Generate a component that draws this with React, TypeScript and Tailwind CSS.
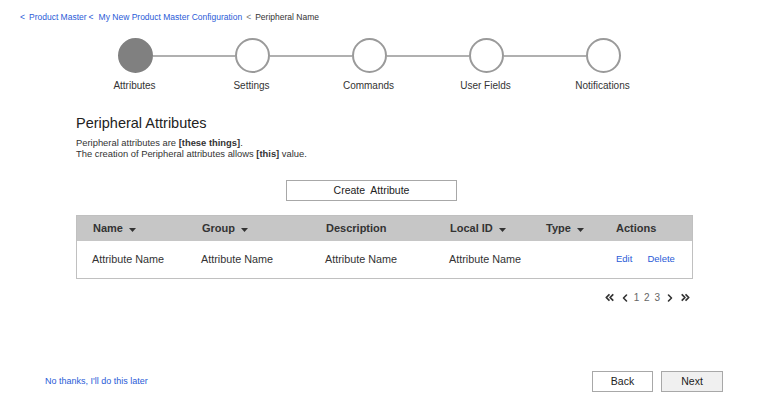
import { ChevronLeft, ChevronRight, ChevronsLeft, ChevronsRight } from "lucide-react";

const steps = ["Attributes", "Settings", "Commands", "User Fields", "Notifications"];

const Caret = () => (
  <svg width="7" height="4" viewBox="0 0 7 4" className="ml-[6px] mt-[2px]">
    <path d="M0 0 L7 0 L3.5 4 Z" fill="#333" />
  </svg>
);

export default function App() {
  return (
    <div className="w-[760px] h-[400px] bg-white flex flex-col text-[#333] font-['Liberation_Sans',Arial,sans-serif] overflow-hidden">
      {/* Breadcrumb */}
      <div className="pl-[20px] pt-[12px] text-[8.5px] leading-[10px] flex items-center">
        <span className="text-[#2a5bd7]">&lt;</span>
        <span className="text-[#2a5bd7] ml-[4px]">Product Master</span>
        <span className="text-[#2a5bd7] ml-[2px]">&lt;</span>
        <span className="text-[#2a5bd7] ml-[5px]">My New Product Master Configuration</span>
        <span className="text-[#777] ml-[4px]">&lt;</span>
        <span className="text-[#333] ml-[4px]">Peripheral Name</span>
      </div>

      {/* Stepper */}
      <div className="flex items-center ml-[118px] mt-[16px]">
        {steps.map((s, i) => (
          <div key={s} className="flex items-center">
            <div className={`w-[35px] h-[35px] rounded-full border-2 border-[#9a9a9a] ${i === 0 ? "bg-[#808080] border-[#808080]" : "bg-white"}`} />
            {i < steps.length - 1 && <div className="w-[82px] h-[2px] bg-[#b0b0b0]" />}
          </div>
        ))}
      </div>
      <div className="flex ml-[76px] mt-[7px]">
        {steps.map(s => (
          <div key={s} className="w-[117px] text-center text-[10px] leading-[12px] text-[#333]">
            {s}
          </div>
        ))}
      </div>

      {/* Content */}
      <div className="ml-[76px] w-[617px]">
        <h1 className="mt-[22px] text-[14.5px] leading-[18px] text-[#222]">Peripheral Attributes</h1>
        <p className="mt-[5px] text-[9.4px] leading-[11px] text-[#333]">
          Peripheral attributes are <b>[these things]</b>.
          <br />
          The creation of Peripheral attributes allows <b>[this]</b> value.
        </p>

        <div className="mt-[21px] flex">
          <button className="ml-[210px] w-[171px] h-[21px] border border-[#a8a8a8] bg-white text-[10.5px] text-[#222]">
            Create&nbsp; Attribute
          </button>
        </div>

        {/* Table */}
        <div className="mt-[14px] border border-[#c0c0c0]">
          <div className="h-[25px] bg-[#c6c6c6] grid grid-cols-[109px_124px_124px_96px_70px_1fr] pl-[16px] items-center text-[11px] font-bold text-[#333]">
            <div className="flex items-center">Name<Caret /></div>
            <div className="flex items-center">Group<Caret /></div>
            <div>Description</div>
            <div className="flex items-center">Local ID<Caret /></div>
            <div className="flex items-center">Type<Caret /></div>
            <div>Actions</div>
          </div>
          <div className="h-[37px] grid grid-cols-[109px_124px_124px_96px_70px_1fr] pl-[15px] items-center text-[10.8px] text-[#333]">
            <div>Attribute Name</div>
            <div>Attribute Name</div>
            <div>Attribute Name</div>
            <div>Attribute Name</div>
            <div />
            <div className="flex gap-[15px] text-[9.5px] text-[#2a5bd7] pl-[1px]">
              <span>Edit</span>
              <span>Delete</span>
            </div>
          </div>
        </div>

        {/* Pagination */}
        <div className="mt-[11px] flex justify-end items-center pr-[1px] text-[10px] text-[#666]">
          <ChevronsLeft size={13} strokeWidth={3.2} className="text-[#333]" />
          <ChevronLeft size={12} strokeWidth={3.2} className="ml-[3px] text-[#333]" />
          <span className="ml-[3px] tracking-[1px]">1 2 3</span>
          <ChevronRight size={12} strokeWidth={3.2} className="ml-[3px] text-[#333]" />
          <ChevronsRight size={13} strokeWidth={3.2} className="ml-[3px] text-[#333]" />
        </div>
      </div>

      {/* Footer */}
      <div className="mt-auto mb-[8px] flex items-center justify-between pl-[45px] pr-[37px]">
        <span className="text-[9px] text-[#2a5bd7]">No thanks, I'll do this later</span>
        <div className="flex gap-[8px]">
          <button className="w-[61px] h-[21px] border border-[#a8a8a8] bg-white text-[10.5px] text-[#222]">Back</button>
          <button className="w-[62px] h-[21px] border border-[#a8a8a8] bg-[#f0f0f0] text-[10.5px] text-[#222]">Next</button>
        </div>
      </div>
    </div>
  );
}
